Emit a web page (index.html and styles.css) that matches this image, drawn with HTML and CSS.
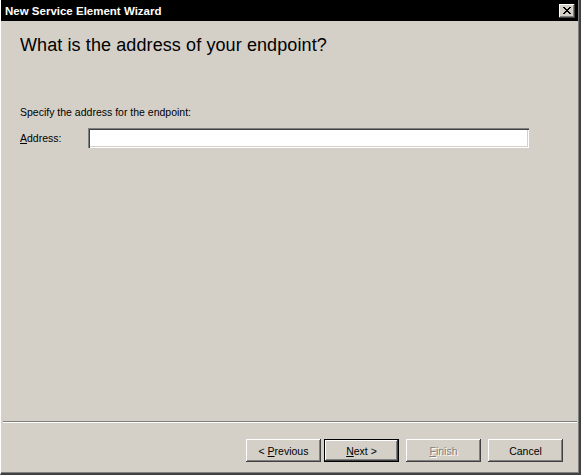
FILE: index.html
```html
<!DOCTYPE html>
<html>
<head>
  <title>New Service Element Wizard</title>
  <link rel="stylesheet" href="styles.css">
</head>
<body>
  <div class="window">
    <div class="title-bar">
      <span class="title-text">New Service Element Wizard</span>
      <button class="close-button" aria-label="Close">
        <svg width="8" height="7" viewBox="0 0 8 7">
          <path d="M0 0h2v1h1v1h2v-1h1v-1h2v1h-1v1h-1v1h-1v1h1v1h1v1h1v1h-2v-1h-1v-1h-2v1h-1v1h-2v-1h1v-1h1v-1h1v-1h-1v-1h-1v-1h-1z" fill="#000"/>
        </svg>
      </button>
    </div>

    <div class="content">
      <h1 class="page-heading">What is the address of your endpoint?</h1>
      <p class="hint">Specify the address for the endpoint:</p>
      <div class="field-row">
        <label for="address" class="field-label"><u>A</u>ddress:</label>
        <input type="text" id="address" class="text-input">
      </div>
    </div>

    <div class="separator"></div>

    <div class="footer">
      <button class="wiz-button"><span>&lt; <u>P</u>revious</span></button>
      <button class="wiz-button default"><span><u>N</u>ext &gt;</span></button>
      <button class="wiz-button spaced" disabled><span><u>F</u>inish</span></button>
      <button class="wiz-button spaced"><span>Cancel</span></button>
    </div>
  </div>
</body>
</html>
```

FILE: styles.css
```css
body {
  margin: 0;
  font-family: "Liberation Sans", Arial, sans-serif;
  font-size: 10.5px;
  color: #000;
  background: #d4d0c8;
}

.window {
  width: 581px;
  height: 475px;
  box-sizing: border-box;
  background: #d4d0c8;
  border-left: 1px solid #fff;
  border-right: 2px solid #404040;
  border-bottom: 2px solid #404040;
  box-shadow: inset -1px -1px 0 #808080;
  display: flex;
  flex-direction: column;
}

.title-bar {
  height: 21px;
  background: #000;
  display: flex;
  align-items: center;
  justify-content: space-between;
  padding: 0 3px 0 4px;
  margin-right: 1px;
}

.title-text {
  color: #fff;
  font-weight: bold;
  font-size: 11.5px;
}

.close-button {
  width: 16px;
  height: 14px;
  padding: 0;
  background: #d4d0c8;
  border: none;
  box-shadow: inset -1px -1px 0 #404040, inset 1px 1px 0 #fff, inset -2px -2px 0 #808080;
  display: flex;
  align-items: center;
  justify-content: center;
}

.content {
  flex: 1;
  padding: 0 20px 0 19px;
}

.page-heading {
  font-size: 18px;
  font-weight: normal;
  letter-spacing: 0.1px;
  margin: 14px 0 0;
  line-height: 21px;
}

.hint {
  margin: 50px 0 0;
  line-height: 13px;
}

.field-row {
  display: flex;
  align-items: center;
  margin-top: 9px;
}

.field-label {
  width: 68px;
}

.text-input {
  width: 441px;
  height: 20px;
  box-sizing: border-box;
  border: none;
  background: #fff;
  box-shadow: inset 1px 1px 0 #808080, inset 2px 2px 0 #404040, inset -1px -1px 0 #fff, inset -2px -2px 0 #d4d0c8;
  padding: 0 4px;
  font: inherit;
}

.separator {
  margin: 0 2px 0 2px;
  border-top: 1px solid #808080;
  border-bottom: 1px solid #fff;
  height: 0;
}

.footer {
  height: 50px;
  display: flex;
  justify-content: flex-end;
  align-items: flex-start;
  padding: 16px 16px 0 0;
  box-sizing: border-box;
}

.wiz-button {
  width: 75px;
  height: 23px;
  margin-left: 3px;
  padding: 0;
  border: none;
  background: #d4d0c8;
  font: inherit;
  color: #000;
  box-shadow: inset -1px -1px 0 #404040, inset 1px 1px 0 #fff, inset -2px -2px 0 #808080;
}

.wiz-button.spaced {
  margin-left: 7px;
}

.wiz-button.default {
  box-shadow: inset 0 0 0 1px #000, inset -2px -2px 0 #404040, inset 2px 2px 0 #fff, inset -3px -3px 0 #808080;
}

.wiz-button:disabled {
  color: #808080;
  text-shadow: 1px 1px 0 #fff;
}
```
